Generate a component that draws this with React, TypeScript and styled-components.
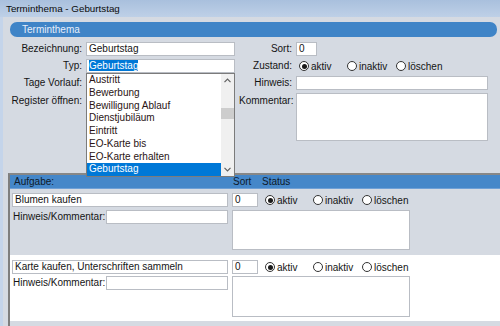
import styled, { createGlobalStyle } from 'styled-components';

const GlobalStyle = createGlobalStyle`
  html, body {
    margin: 0;
    padding: 0;
    background: #d5dae2;
  }
  body {
    font-family: "Liberation Sans", Arial, sans-serif;
    font-size: 10px;
    color: #141414;
  }
`;

const Window = styled.div`
  width: 500px;
  height: 326px;
  overflow: hidden;
  display: flex;
  flex-direction: column;
  background: #d5dae2;
`;

const TitleBar = styled.div`
  height: 17px;
  flex: none;
  display: flex;
  align-items: center;
  padding-left: 6px;
  font-size: 9.8px;
  color: #0a0a0a;
  background: linear-gradient(#a9c0dd, #bed0e7);
`;

const Body = styled.div`
  flex: 1;
  border-left: 3px solid #c4d4ea;
  display: flex;
  flex-direction: column;
  min-height: 0;
`;

const SectionPill = styled.div`
  margin: 5px 3px 0 7px;
  height: 15px;
  border-radius: 7px;
  background: #3f84c7;
  color: #e6eefa;
  display: flex;
  align-items: center;
  padding-left: 12px;
  font-size: 10px;
`;

const TopForm = styled.div`
  margin-top: 5px;
  display: grid;
  grid-template-columns: 79px 149px 53px 192px;
  grid-template-rows: 14px 14px 14px 48px;
  column-gap: 4px;
  row-gap: 3px;
`;

const Label = styled.div<{ $top?: boolean }>`
  text-align: right;
  white-space: nowrap;
  line-height: 14px;
  align-self: ${(p) => (p.$top ? 'start' : 'center')};
  padding-top: ${(p) => (p.$top ? '1px' : '0')};
`;

const Field = styled.div<{ $top?: boolean }>`
  position: relative;
  display: flex;
  align-items: ${(p) => (p.$top ? 'flex-start' : 'center')};
  padding-top: ${(p) => (p.$top ? '2px' : '0')};
`;

const TextBox = styled.div<{ $w?: number; $h?: number }>`
  box-sizing: border-box;
  width: ${(p) => (p.$w ? `${p.$w}px` : '100%')};
  height: ${(p) => (p.$h ? `${p.$h}px` : '14px')};
  background: #fff;
  border: 1px solid #b9bdc4;
  padding: 0 2px;
  line-height: 12px;
  white-space: nowrap;
  overflow: hidden;
`;

const Selected = styled.span`
  background: #0078d7;
  color: #fff;
`;

const Dropdown = styled.div`
  position: absolute;
  top: 14px;
  left: 0;
  width: 149px;
  height: 104px;
  box-sizing: border-box;
  border: 1px solid #7b7b7b;
  background: #fff;
  display: flex;
  z-index: 5;
`;

const OptionList = styled.div`
  flex: 1;
  display: flex;
  flex-direction: column;
`;

const Option = styled.div<{ $active?: boolean }>`
  height: 12.75px;
  line-height: 12.75px;
  padding-left: 2px;
  color: ${(p) => (p.$active ? '#fff' : '#2a1414')};
  background: ${(p) => (p.$active ? '#0078d7' : 'transparent')};
`;

const ScrollBar = styled.div`
  width: 13px;
  background: #f0f0f0;
  display: flex;
  flex-direction: column;
  align-items: center;
`;

const ScrollArrow = styled.div`
  height: 13px;
  display: flex;
  align-items: center;
  justify-content: center;
`;

const ScrollTrack = styled.div`
  flex: 1;
  width: 100%;
  padding-top: 21px;
`;

const ScrollThumb = styled.div`
  height: 11px;
  background: #cdcdcd;
`;

const CheckBox = styled.div`
  width: 11px;
  height: 11px;
  box-sizing: border-box;
  border: 1px solid #333;
  background: #fff;
`;

const RadioGroup = styled.div<{ $pad?: number }>`
  display: flex;
  align-items: center;
  padding-left: ${(p) => p.$pad ?? 3}px;
`;

const RadioOption = styled.label<{ $w?: number }>`
  display: flex;
  align-items: center;
  gap: 2px;
  width: ${(p) => (p.$w ? `${p.$w}px` : 'auto')};
  white-space: nowrap;
`;

const RadioCircle = styled.span<{ $on?: boolean }>`
  width: 10px;
  height: 10px;
  box-sizing: border-box;
  border-radius: 50%;
  border: 1px solid #333;
  background: #fff;
  display: flex;
  align-items: center;
  justify-content: center;
  &::after {
    content: '';
    width: 5px;
    height: 5px;
    border-radius: 50%;
    background: ${(p) => (p.$on ? '#1a1a1a' : 'transparent')};
  }
`;

const TaskFrame = styled.div`
  margin: 32px 0 0 5px;
  flex: 1;
  border-top: 2px solid #878787;
  border-left: 2px solid #7e7e7e;
  display: flex;
  flex-direction: column;
`;

const TaskHeader = styled.div`
  height: 13px;
  background: #4587c9;
  border-bottom: 1px solid #6fa0d6;
  display: grid;
  grid-template-columns: 219px 29px auto;
  align-items: center;
  padding-left: 4px;
  color: #0e1a2a;
`;

const TaskBlock = styled.div<{ $alt?: boolean }>`
  background: ${(p) => (p.$alt ? '#ffffff' : '#d5dae2')};
  padding: ${(p) => (p.$alt ? '5px 0 4px 2px' : '4px 0 5px 2px')};
  display: grid;
  grid-template-columns: 216px 26px auto;
  grid-template-rows: 14px ${(p) => (p.$alt ? '41px' : '40px')};
  column-gap: 4px;
  row-gap: ${(p) => (p.$alt ? '2px' : '3px')};
`;

const NoteCell = styled.div`
  display: flex;
  align-items: flex-start;
  justify-content: space-between;
  padding-left: 1px;
  line-height: 14px;
`;

const NoteArea = styled(TextBox)`
  grid-column: 2 / span 2;
`;

const Chevron = ({ up }: { up?: boolean }) => (
  <svg width="7" height="5" viewBox="0 0 7 5">
    <path
      d={up ? 'M0.5 4.2 L3.5 1.2 L6.5 4.2' : 'M0.5 0.8 L3.5 3.8 L6.5 0.8'}
      fill="none"
      stroke="#606060"
      strokeWidth="1.2"
    />
  </svg>
);

const Status = ({ value }: { value: string }) => (
  <RadioGroup>
    <RadioOption $w={48}>
      <RadioCircle $on={value === 'aktiv'} />
      aktiv
    </RadioOption>
    <RadioOption $w={49}>
      <RadioCircle $on={value === 'inaktiv'} />
      inaktiv
    </RadioOption>
    <RadioOption>
      <RadioCircle $on={value === 'löschen'} />
      löschen
    </RadioOption>
  </RadioGroup>
);

const types = [
  'Austritt',
  'Bewerbung',
  'Bewilligung Ablauf',
  'Dienstjubiläum',
  'Eintritt',
  'EO-Karte bis',
  'EO-Karte erhalten',
  'Geburtstag',
];

const tasks = [
  { name: 'Blumen kaufen', sort: 0 },
  { name: 'Karte kaufen, Unterschriften sammeln', sort: 0 },
];

export default function App() {
  return (
    <>
      <GlobalStyle />
      <Window>
        <TitleBar>Terminthema - Geburtstag</TitleBar>
        <Body>
          <SectionPill>Terminthema</SectionPill>
          <TopForm>
            <Label>Bezeichnung:</Label>
            <Field>
              <TextBox>Geburtstag</TextBox>
            </Field>
            <Label>Sort:</Label>
            <Field>
              <TextBox $w={21}>0</TextBox>
            </Field>

            <Label>Typ:</Label>
            <Field>
              <TextBox>
                <Selected>Geburtstag</Selected>
              </TextBox>
              <Dropdown>
                <OptionList>
                  {types.map((t) => (
                    <Option key={t} $active={t === 'Geburtstag'}>
                      {t}
                    </Option>
                  ))}
                </OptionList>
                <ScrollBar>
                  <ScrollArrow>
                    <Chevron up />
                  </ScrollArrow>
                  <ScrollTrack>
                    <ScrollThumb />
                  </ScrollTrack>
                  <ScrollArrow>
                    <Chevron />
                  </ScrollArrow>
                </ScrollBar>
              </Dropdown>
            </Field>
            <Label>Zustand:</Label>
            <Status value="aktiv" />

            <Label>Tage Vorlauf:</Label>
            <Field>
              <TextBox $w={40} />
            </Field>
            <Label>Hinweis:</Label>
            <Field>
              <TextBox />
            </Field>

            <Label $top>Register öffnen:</Label>
            <Field $top>
              <CheckBox />
            </Field>
            <Label $top>Kommentar:</Label>
            <TextBox $h={48} />
          </TopForm>

          <TaskFrame>
            <TaskHeader>
              <span>Aufgabe:</span>
              <span>Sort</span>
              <span>Status</span>
            </TaskHeader>
            {tasks.map((t, i) => (
              <TaskBlock key={t.name} $alt={i % 2 === 1}>
                <TextBox>{t.name}</TextBox>
                <TextBox>{t.sort}</TextBox>
                <Status value="aktiv" />
                <NoteCell>
                  Hinweis/Kommentar:
                  <TextBox $w={122} />
                </NoteCell>
                <NoteArea $w={178} $h={i % 2 === 1 ? 41 : 40} />
              </TaskBlock>
            ))}
          </TaskFrame>
        </Body>
      </Window>
    </>
  );
}
